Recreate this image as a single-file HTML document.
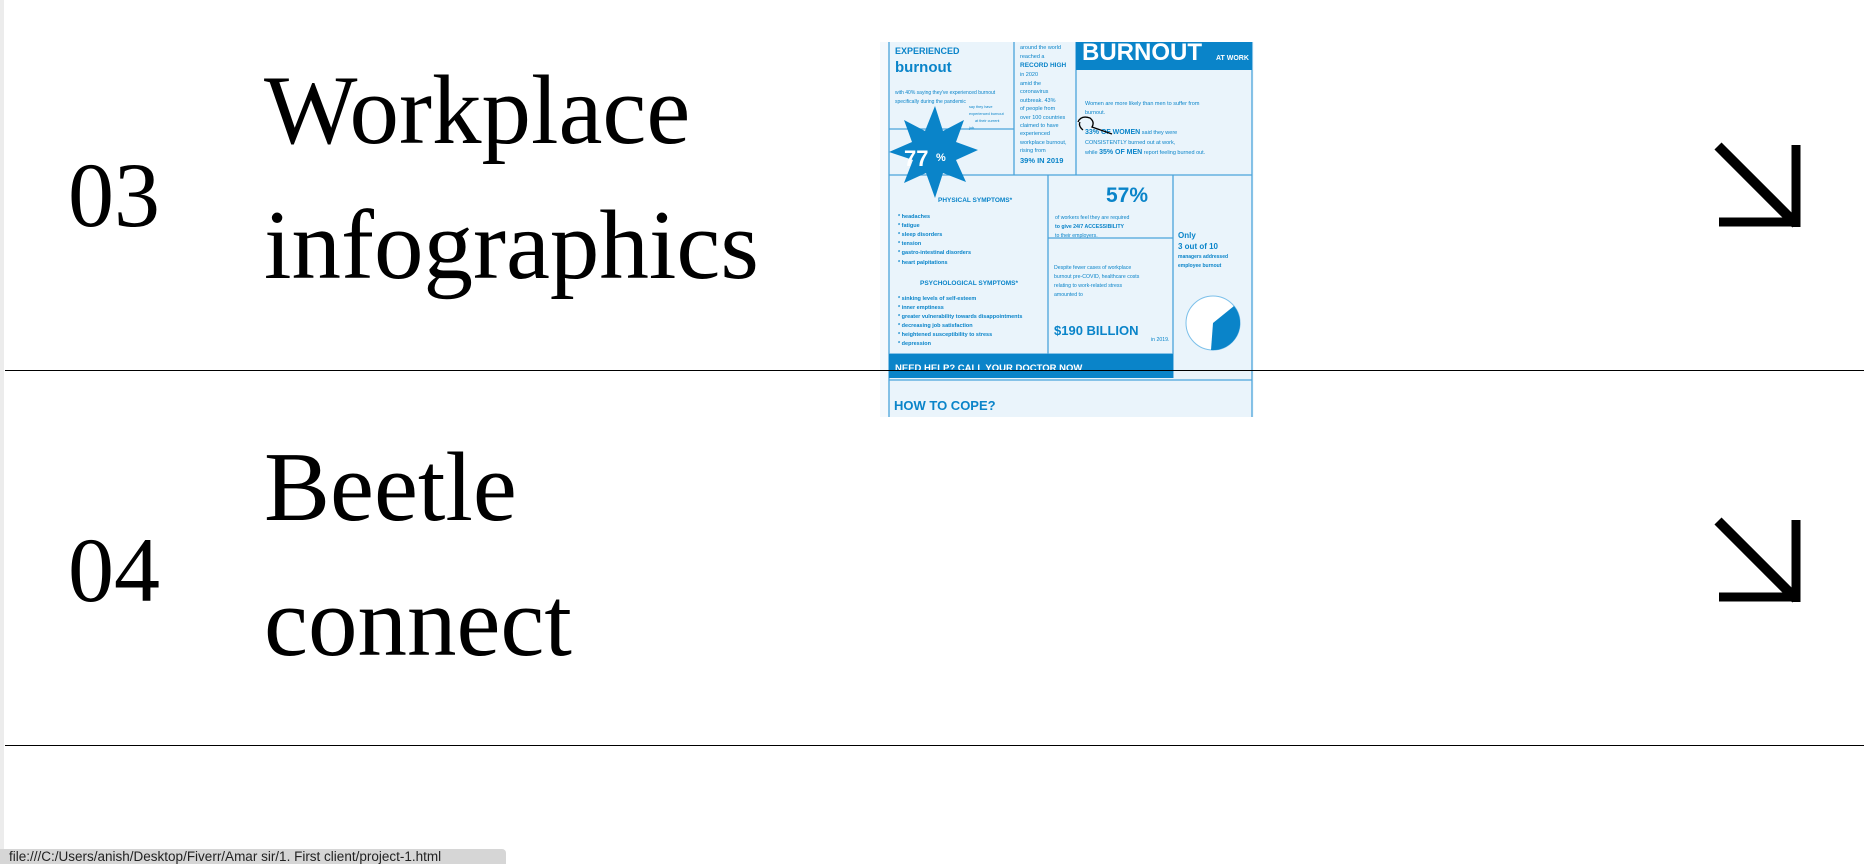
<!DOCTYPE html>
<html><head><meta charset="utf-8">
<style>
html,body{margin:0;padding:0;width:1864px;height:864px;overflow:hidden;background:#fff;position:relative;font-family:"Liberation Serif",serif;}
.lb{position:absolute;left:0;top:0;width:4px;height:864px;background:#ececec;}
.hr{position:absolute;left:5px;right:0;height:1px;background:#000;}
.num{position:absolute;left:68px;font-size:92px;line-height:1;color:#000;}
.title{position:absolute;left:264px;font-size:99px;line-height:135px;color:#000;}
.arrow{position:absolute;left:1710px;width:100px;height:100px;}
.status{position:absolute;left:0;top:849px;width:506px;height:15px;background:#d6d6d6;border-top-right-radius:4px;font-family:"Liberation Sans",sans-serif;font-size:13.5px;line-height:16px;color:#222;padding-left:9px;box-sizing:border-box;white-space:nowrap;overflow:hidden;}
.img{position:absolute;left:880px;top:42px;width:374px;height:375px;}
</style></head><body>
<div class="lb"></div>

<div class="num" style="top:149px">03</div>
<div class="title" style="top:43px">Workplace<br>infographics</div>
<svg class="arrow" style="top:133px" viewBox="0 0 100 100"><path d="M8 13 L86 91" stroke="#000" stroke-width="10" fill="none"/><path d="M86 12 V94 M9 89 H90" stroke="#000" stroke-width="9" fill="none"/></svg>

<svg class="img" viewBox="0 0 374 375" font-family="Liberation Sans, sans-serif" font-weight="bold">
<rect x="0" y="0" width="374" height="375" fill="#f4f9fd"/>
<rect x="9" y="0" width="363" height="375" fill="#eaf4fb"/>
<g stroke="#4aa3db" stroke-width="1.3" fill="none">
<path d="M9 0V375 M372 0V375 M134 0V133 M196 0V133 M9 87H134 M9 133H372 M168 133V312 M293 133V336 M168 196H293 M9 312H293 M9 338H372"/>
</g>
<rect x="196" y="0" width="176" height="28" fill="#0a84c9"/>
<text x="202" y="18" fill="#fff" font-size="24" font-weight="900">BURNOUT</text>
<text x="336" y="18" fill="#fff" font-size="7">AT WORK</text>
<text x="15" y="12" fill="#0a84c9" font-size="9">EXPERIENCED</text>
<text x="15" y="30" fill="#0a84c9" font-size="15" font-weight="900">burnout</text>
<text x="15" y="52" fill="#0a84c9" font-size="5" font-weight="normal">with 40% saying they've experienced burnout</text>
<text x="15" y="61" fill="#0a84c9" font-size="5" font-weight="normal">specifically during the pandemic</text>
<g fill="#0a84c9" font-size="5.5" font-weight="normal">
<text x="140" y="7">around the world</text><text x="140" y="16">reached a</text>
<text x="140" y="25" font-weight="bold" font-size="6.5">RECORD HIGH</text>
<text x="140" y="34">in 2020</text><text x="140" y="43">amid the</text><text x="140" y="51">coronavirus</text>
<text x="140" y="60">outbreak. 43%</text><text x="140" y="68">of people from</text><text x="140" y="77">over 100 countries</text>
<text x="140" y="85">claimed to have</text><text x="140" y="93">experienced</text><text x="140" y="102">workplace burnout,</text>
<text x="140" y="110">rising from</text>
<text x="140" y="121" font-weight="bold" font-size="7.5">39% IN 2019</text>
<text x="205" y="63">Women are more likely than men to suffer from</text><text x="205" y="72">burnout.</text>
<text x="205" y="92"><tspan font-weight="bold" font-size="7">33% OF WOMEN</tspan> said they were</text>
<text x="205" y="102">CONSISTENTLY burned out at work,</text>
<text x="205" y="112">while <tspan font-weight="bold" font-size="7">35% OF MEN</tspan> report feeling burned out.</text>
<text x="89" y="66" font-size="3.8">say they have</text><text x="89" y="73" font-size="3.8">experienced burnout</text><text x="95" y="80" font-size="3.8">at their current</text><text x="89" y="87" font-size="3.8">job.</text>
</g>
<path d="M55 64 L63 89 L84 78 L76 100 L98 108 L76 118 L86 140 L63 131 L55 156 L46 131 L24 141 L33 118 L9 110 L32 100 L24 78 L45 89 Z" fill="#0a84c9"/>
<text x="24" y="124" fill="#fff" font-size="22" font-weight="bold">77</text><text x="56" y="119" fill="#fff" font-size="11">%</text>
<g fill="#0a84c9">
<text x="58" y="160" font-size="6.5">PHYSICAL SYMPTOMS*</text>
<g font-size="5.5">
<text x="18" y="176">* headaches</text><text x="18" y="185">* fatigue</text><text x="18" y="194">* sleep disorders</text>
<text x="18" y="203">* tension</text><text x="18" y="212">* gastro-intestinal disorders</text><text x="18" y="222">* heart palpitations</text>
<text x="18" y="258">* sinking levels of self-esteem</text><text x="18" y="267">* inner emptiness</text>
<text x="18" y="276">* greater vulnerability towards disappointments</text><text x="18" y="285">* decreasing job satisfaction</text>
<text x="18" y="294">* heightened susceptibility to stress</text><text x="18" y="303">* depression</text>
</g>
<text x="40" y="243" font-size="6.5">PSYCHOLOGICAL SYMPTOMS*</text>
<text x="226" y="160" font-size="21">57%</text>
<g font-size="5.2"><text x="175" y="177" font-weight="normal">of workers feel they are required</text><text x="175" y="186">to give 24/7 ACCESSIBILITY</text><text x="175" y="195" font-weight="normal">to their employers.</text>
<text x="174" y="227" font-weight="normal">Despite fewer cases of workplace</text><text x="174" y="236" font-weight="normal">burnout pre-COVID, healthcare costs</text>
<text x="174" y="245" font-weight="normal">relating to work-related stress</text><text x="174" y="254" font-weight="normal">amounted to</text>
<text x="271" y="299" font-weight="normal">in 2019.</text></g>
<text x="174" y="293" font-size="13">$190 BILLION</text>
<text x="298" y="196" font-size="8" font-weight="900">Only</text>
<text x="298" y="207" font-size="8" font-weight="900">3 out of 10</text>
<text x="298" y="216" font-size="5">managers addressed</text><text x="298" y="225" font-size="5">employee burnout</text>
<text x="14" y="368" font-size="13">HOW TO COPE?</text>
</g>
<circle cx="333" cy="281" r="27" fill="#fff" stroke="#7cc0ea" stroke-width="1"/>
<path d="M333 281 L354 264 A27 27 0 0 1 331 308 Z" fill="#0a84c9"/>
<rect x="9" y="312" width="284" height="24" fill="#0a84c9"/>
<text x="15" y="329" fill="#fff" font-size="9.5" font-weight="900">NEED HELP? CALL YOUR DOCTOR NOW</text>
<g stroke="#000" stroke-width="1.3" fill="none"><path d="M198 80 q3 -7 12 -4 q5 4 2 9 l20 7 M200 80 q-2 4 3 8"/></g>
</svg>

<div class="hr" style="top:370px"></div>

<div class="num" style="top:524px">04</div>
<div class="title" style="top:420px">Beetle<br>connect</div>
<svg class="arrow" style="top:508px" viewBox="0 0 100 100"><path d="M8 13 L86 91" stroke="#000" stroke-width="10" fill="none"/><path d="M86 12 V94 M9 89 H90" stroke="#000" stroke-width="9" fill="none"/></svg>

<div class="hr" style="top:745px"></div>

<div class="status">file:///C:/Users/anish/Desktop/Fiverr/Amar sir/1. First client/project-1.html</div>
</body></html>
